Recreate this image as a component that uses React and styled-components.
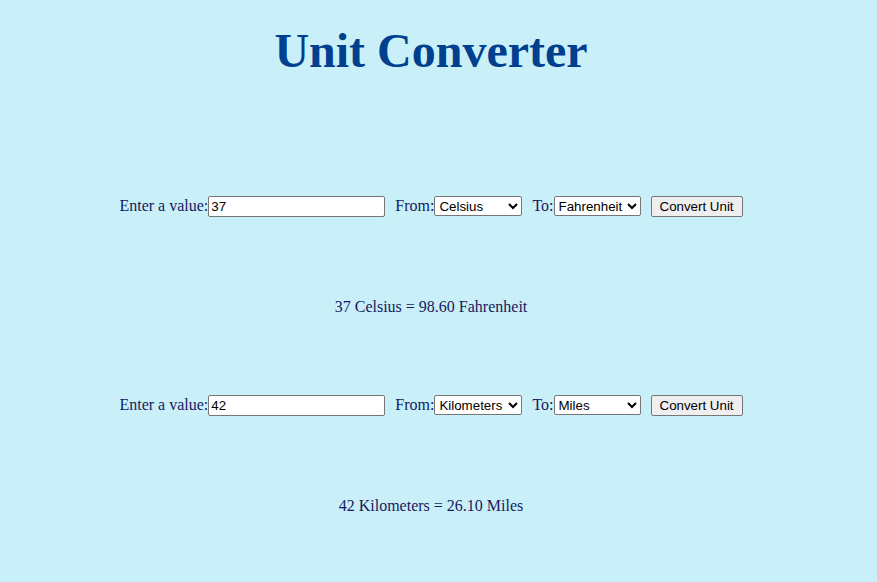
import React from "react";
import styled, { createGlobalStyle } from "styled-components";

const GlobalStyle = createGlobalStyle`
  html, body {
    margin: 0;
    background: #c9f0f8;
  }
  body {
    font-family: "Liberation Serif", "Times New Roman", serif;
    font-size: 16px;
    color: #191960;
  }
`;

const Page = styled.div`
  display: flex;
  flex-direction: column;
  align-items: center;
  padding: 24px 15px 40px 0;
`;

const Title = styled.h1`
  margin: 0;
  font-size: 48px;
  font-weight: bold;
  color: #00408f;
  line-height: 53px;
`;

const List = styled.div`
  display: flex;
  flex-direction: column;
  gap: 78px;
  margin-top: 118px;
  width: 100%;
`;

const Converter = styled.section`
  display: flex;
  flex-direction: column;
  align-items: center;
  gap: 81px;
`;

const Row = styled.form`
  display: flex;
  align-items: center;
  justify-content: center;
  height: 22px;
`;

const Field = styled.label`
  display: flex;
  align-items: center;
  margin-right: 10px;
`;

const TextInput = styled.input`
  width: 171px;
  height: 17px;
  padding: 1px 2px;
  border: 1px solid #767676;
  border-radius: 2px;
  font-family: "Liberation Sans", Arial, sans-serif;
  font-size: 13.33px;
  color: #000;
  background: #fff;
`;

const Select = styled.select`
  width: ${(p) => p.$w}px;
  height: 20px;
  border: 1px solid #767676;
  border-radius: 2px;
  font-family: "Liberation Sans", Arial, sans-serif;
  font-size: 13.33px;
  color: #000;
  background: #fff;
`;

const Button = styled.button`
  height: 21px;
  padding: 1px 8px;
  border: 1px solid #767676;
  border-radius: 2px;
  background: #efefef;
  font-family: "Liberation Sans", Arial, sans-serif;
  font-size: 13.33px;
  color: #000;
`;

const Result = styled.p`
  margin: 0;
  line-height: 18px;
`;

const units = {
  temp: ["Celsius", "Fahrenheit", "Kelvin"],
  length: ["Kilometers", "Miles", "Meters"],
};

const ConverterBlock = ({ value, from, to, list, result }) => (
  <Converter>
    <Row onSubmit={(e) => e.preventDefault()}>
      <Field>
        Enter a value:
        <TextInput defaultValue={value} />
      </Field>
      <Field>
        From:
        <Select $w={88} defaultValue={from}>
          {list.map((u) => (
            <option key={u}>{u}</option>
          ))}
        </Select>
      </Field>
      <Field>
        To:
        <Select $w={87} defaultValue={to}>
          {list.map((u) => (
            <option key={u}>{u}</option>
          ))}
        </Select>
      </Field>
      <Button type="submit">Convert Unit</Button>
    </Row>
    <Result>{result}</Result>
  </Converter>
);

const App = () => {
  return (
    <>
      <GlobalStyle />
      <Page>
        <Title>Unit Converter</Title>
        <List>
          <ConverterBlock
            value="37"
            from="Celsius"
            to="Fahrenheit"
            list={units.temp}
            result="37 Celsius = 98.60 Fahrenheit"
          />
          <ConverterBlock
            value="42"
            from="Kilometers"
            to="Miles"
            list={units.length}
            result="42 Kilometers = 26.10 Miles"
          />
        </List>
      </Page>
    </>
  );
};

export default App;
